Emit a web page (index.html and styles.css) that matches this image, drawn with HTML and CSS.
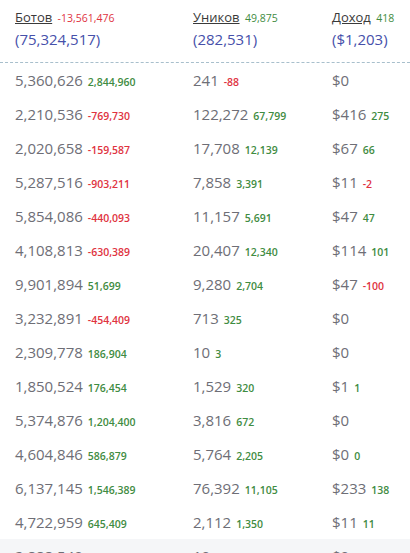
FILE: index.html
```html
<!DOCTYPE html>
<html lang="ru">
<head>
<meta charset="utf-8">
<link rel="stylesheet" href="styles.css">
</head>
<body>
<div class="table">
  <div class="row head">
    <div class="cell">
      <div class="label"><span class="name">Ботов</span> <span class="d neg">-13,561,476</span></div>
      <div class="total">(75,324,517)</div>
    </div>
    <div class="cell">
      <div class="label"><span class="name">Уников</span> <span class="d pos">49,875</span></div>
      <div class="total">(282,531)</div>
    </div>
    <div class="cell">
      <div class="label"><span class="name">Доход</span> <span class="d pos">418</span></div>
      <div class="total">($1,203)</div>
    </div>
  </div>

  <div class="row"><div class="cell">5,360,626<span class="d pos">2,844,960</span></div><div class="cell">241<span class="d neg">-88</span></div><div class="cell">$0</div></div>
  <div class="row"><div class="cell">2,210,536<span class="d neg">-769,730</span></div><div class="cell">122,272<span class="d pos">67,799</span></div><div class="cell">$416<span class="d pos">275</span></div></div>
  <div class="row"><div class="cell">2,020,658<span class="d neg">-159,587</span></div><div class="cell">17,708<span class="d pos">12,139</span></div><div class="cell">$67<span class="d pos">66</span></div></div>
  <div class="row"><div class="cell">5,287,516<span class="d neg">-903,211</span></div><div class="cell">7,858<span class="d pos">3,391</span></div><div class="cell">$11<span class="d neg">-2</span></div></div>
  <div class="row"><div class="cell">5,854,086<span class="d neg">-440,093</span></div><div class="cell">11,157<span class="d pos">5,691</span></div><div class="cell">$47<span class="d pos">47</span></div></div>
  <div class="row"><div class="cell">4,108,813<span class="d neg">-630,389</span></div><div class="cell">20,407<span class="d pos">12,340</span></div><div class="cell">$114<span class="d pos">101</span></div></div>
  <div class="row"><div class="cell">9,901,894<span class="d pos">51,699</span></div><div class="cell">9,280<span class="d pos">2,704</span></div><div class="cell">$47<span class="d neg">-100</span></div></div>
  <div class="row"><div class="cell">3,232,891<span class="d neg">-454,409</span></div><div class="cell">713<span class="d pos">325</span></div><div class="cell">$0</div></div>
  <div class="row"><div class="cell">2,309,778<span class="d pos">186,904</span></div><div class="cell">10<span class="d pos">3</span></div><div class="cell">$0</div></div>
  <div class="row"><div class="cell">1,850,524<span class="d pos">176,454</span></div><div class="cell">1,529<span class="d pos">320</span></div><div class="cell">$1<span class="d pos">1</span></div></div>
  <div class="row"><div class="cell">5,374,876<span class="d pos">1,204,400</span></div><div class="cell">3,816<span class="d pos">672</span></div><div class="cell">$0</div></div>
  <div class="row"><div class="cell">4,604,846<span class="d pos">586,879</span></div><div class="cell">5,764<span class="d pos">2,205</span></div><div class="cell">$0<span class="d pos">0</span></div></div>
  <div class="row"><div class="cell">6,137,145<span class="d pos">1,546,389</span></div><div class="cell">76,392<span class="d pos">11,105</span></div><div class="cell">$233<span class="d pos">138</span></div></div>
  <div class="row"><div class="cell">4,722,959<span class="d pos">645,409</span></div><div class="cell">2,112<span class="d pos">1,350</span></div><div class="cell">$11<span class="d pos">11</span></div></div>
  <div class="row hl"><div class="cell">2,888,540<span class="d pos">52,114</span></div><div class="cell">10<span class="d pos">1</span></div><div class="cell">$0</div></div>
</div>
</body>
</html>
```

FILE: styles.css
```css
html, body {
  margin: 0;
  padding: 0;
  background: #ffffff;
}

body {
  font-family: "Open Sans", "Noto Sans", sans-serif;
  color: #6e6e76;
  overflow: hidden;
}

.row {
  display: grid;
  grid-template-columns: 178px 139px 1fr;
  padding-left: 15px;
  height: 34px;
  box-sizing: border-box;
  padding-top: 1px;
  font-size: 15px;
  line-height: 33px;
  white-space: nowrap;
}

.row.head {
  height: auto;
  padding-top: 7px;
  padding-bottom: 12px;
  line-height: normal;
  border-bottom: 1px dashed #a8bfcc;
}

.row.hl {
  background: #f5f6f8;
}

.label {
  font-size: 13px;
  line-height: 20px;
  color: #3a3a3a;
}

.name {
  text-decoration: underline;
}

.total {
  font-size: 15px;
  line-height: 22px;
  color: #4650aa;
}

.d {
  font-size: 10.5px;
  font-weight: 600;
  margin-left: 5px;
}

.label .d {
  margin-left: 2px;
  font-weight: 400;
}

.pos {
  color: #3f8c42;
}

.neg {
  color: #e0333f;
}
```
